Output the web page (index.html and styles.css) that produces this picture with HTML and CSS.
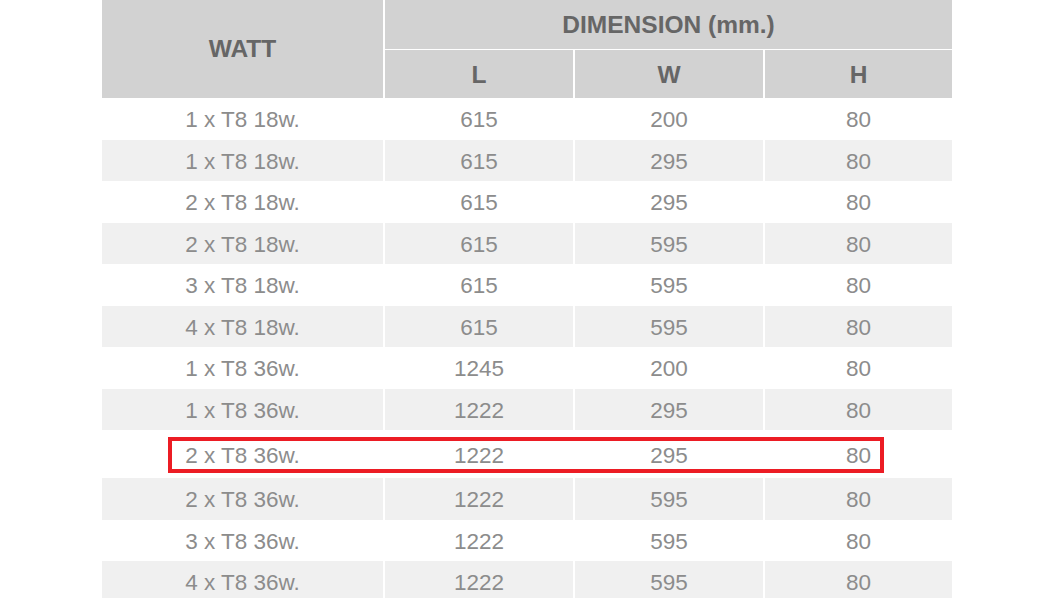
FILE: index.html
```html
<!DOCTYPE html>
<html lang="en">
<head>
<meta charset="utf-8">
<title>Dimension table</title>
<link rel="stylesheet" href="styles.css">
</head>
<body>
<table class="spec">
  <colgroup>
    <col class="c-watt"><col class="c-dim"><col class="c-dim"><col class="c-h">
  </colgroup>
  <thead>
    <tr class="h-top">
      <th rowspan="2" class="watt">WATT</th>
      <th colspan="3" class="dim">DIMENSION (mm.)</th>
    </tr>
    <tr class="h-sub">
      <th>L</th><th>W</th><th>H</th>
    </tr>
  </thead>
  <tbody>
    <tr><td>1 x T8 18w.</td><td>615</td><td>200</td><td>80</td></tr>
    <tr><td>1 x T8 18w.</td><td>615</td><td>295</td><td>80</td></tr>
    <tr><td>2 x T8 18w.</td><td>615</td><td>295</td><td>80</td></tr>
    <tr><td>2 x T8 18w.</td><td>615</td><td>595</td><td>80</td></tr>
    <tr><td>3 x T8 18w.</td><td>615</td><td>595</td><td>80</td></tr>
    <tr><td>4 x T8 18w.</td><td>615</td><td>595</td><td>80</td></tr>
    <tr><td>1 x T8 36w.</td><td>1245</td><td>200</td><td>80</td></tr>
    <tr><td>1 x T8 36w.</td><td>1222</td><td>295</td><td>80</td></tr>
    <tr class="hl"><td class="hl-cell"><span class="hl-box"></span>2 x T8 36w.</td><td>1222</td><td>295</td><td>80</td></tr>
    <tr><td>2 x T8 36w.</td><td>1222</td><td>595</td><td>80</td></tr>
    <tr><td>3 x T8 36w.</td><td>1222</td><td>595</td><td>80</td></tr>
    <tr><td>4 x T8 36w.</td><td>1222</td><td>595</td><td>80</td></tr>
  </tbody>
</table>
</body>
</html>
```

FILE: styles.css
```css
html, body {
  margin: 0;
  padding: 0;
  background: #ffffff;
  overflow: hidden;
}

.spec {
  margin-left: 100px;
  width: 854px;
  table-layout: fixed;
  border-collapse: separate;
  border-spacing: 2px 0;
  font-family: "Liberation Sans", Arial, sans-serif;
}

.c-watt { width: 281px; }
.c-dim { width: 188px; }
.c-h { width: 187px; }

.spec th {
  background: #d2d2d2;
  color: #666666;
  font-weight: bold;
  font-size: 24.5px;
  text-align: center;
  vertical-align: middle;
  padding: 0;
}

.h-top th.dim {
  height: 49px;
  border-bottom: 1px solid #ffffff;
}

.h-sub th {
  height: 47px;
  padding-top: 1px;
}

.spec td {
  height: 41.5px;
  padding: 3px 0 0;
  box-sizing: border-box;
  font-size: 22.5px;
  color: #8c8c8c;
  text-align: center;
  vertical-align: middle;
  background: #ffffff;
}

.spec tbody tr:nth-child(even) td {
  background: #f0f0f0;
}

.spec tr.hl td {
  height: 48px;
}

.hl-cell {
  position: relative;
}

.hl-box {
  position: absolute;
  left: 66px;
  top: 7px;
  width: 708px;
  height: 28px;
  border: 4px solid #ec1c24;
  pointer-events: none;
}
```
